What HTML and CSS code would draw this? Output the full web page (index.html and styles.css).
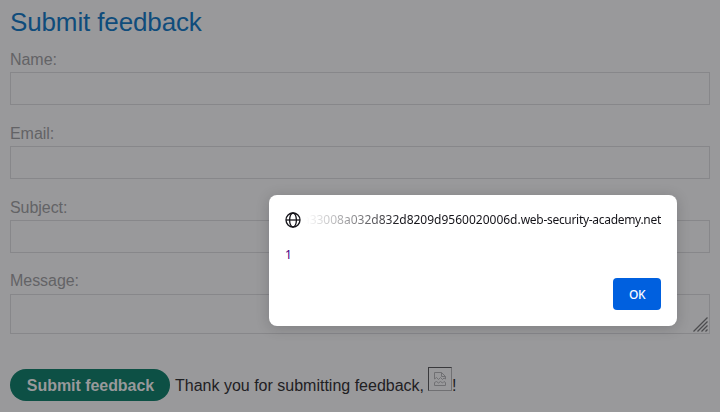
FILE: index.html
```html
<!DOCTYPE html>
<html lang="en">
<head>
<meta charset="utf-8">
<title>Submit feedback</title>
<link rel="stylesheet" href="styles.css">
</head>
<body>
<main class="page">
  <h1 class="title">Submit feedback</h1>
  <form class="form">
    <label class="label" for="name">Name:</label>
    <input class="field" id="name" type="text">
    <label class="label" for="email">Email:</label>
    <input class="field" id="email" type="text">
    <label class="label" for="subject">Subject:</label>
    <input class="field" id="subject" type="text">
    <label class="label label-message" for="message">Message:</label>
    <div class="message">
      <textarea class="field area" id="message"></textarea>
      <svg class="grip" width="15" height="15" viewBox="0 0 15 15" fill="none" stroke="#4c4c4f" stroke-width="1.3"><path d="M.5 14.5 14.5.5M4.5 14.5l10-10M8.5 14.5l6-6M12.5 14.5l2-2"/></svg>
    </div>
    <div class="actions">
      <button class="submit" type="button">Submit feedback</button>
      <span class="thanks">Thank you for submitting feedback,</span>
      <span class="broken"><svg width="12" height="14" viewBox="0 0 12 14" fill="none" stroke="#707073"><path d="M.5 7V.5h7l4 4V7M7.5.5v4h4M.5 7l2-1.500 2 2 2-2 2 2 1.500-1.500 1.500 1M.5 13.500v-3l2-1 2 1.500 2-1.500 2 1.500 1.500-1.500 1.500 1v3z"/></svg></span><span class="bang">!</span>
    </div>
  </form>
</main>
<section class="dialog" role="dialog">
  <header class="origin">
    <svg class="globe" width="16" height="16" viewBox="0 0 16 16" fill="none" stroke="#15141a" stroke-width="1.3"><circle cx="8" cy="8" r="7"/><ellipse cx="8" cy="8" rx="3.4" ry="7"/><path d="M1 8h14"/></svg>
    <div class="host"><span class="host-text">a33008a032d832d8209d9560020006d.<span class="domain">web-security-academy.net</span></span></div>
  </header>
  <p class="text">1</p>
  <button class="ok" type="button">OK</button>
</section>
</body>
</html>
```
FILE: styles.css
```css
* { box-sizing: border-box; }
body {
  margin: 0;
  height: 412px;
  overflow: hidden;
  background: #99999b;
  font-family: "Liberation Sans", Arial, sans-serif;
  font-size: 16px;
}
.page { padding: 7px 10px 0; }
.title {
  margin: 0;
  font-size: 26px;
  line-height: 30px;
  font-weight: 400;
  letter-spacing: -.13px;
  color: #0f4c7b;
}
.form { display: flex; flex-direction: column; padding-top: 13px; }
.label { height: 22px; line-height: 19px; letter-spacing: -.05px; color: #636366; }
.field {
  width: 100%;
  height: 33px;
  margin: 0 0 19px;
  padding: 6px;
  border: 1px solid #87878a;
  background: transparent;
  outline: 0;
}
.label-message { line-height: 18px; }
.message { position: relative; height: 40px; }
.area { display: block; height: 40px; margin: 0; resize: none; }
.grip { position: absolute; right: 2px; bottom: 2px; }
.actions { display: flex; align-items: center; height: 32px; margin-top: 35px; }
.submit {
  width: 160px;
  height: 32px;
  padding: 2px 0 0 1px;
  border: 0;
  border-radius: 16px;
  background: #0d5045;
  color: #99999b;
  font: bold 16px "Liberation Sans", Arial, sans-serif;
  letter-spacing: -.05px;
}
.thanks { margin-left: 5px; padding-top: 2px; color: #1f2023; white-space: nowrap; }
.broken {
  display: flex;
  align-items: center;
  justify-content: center;
  width: 24px;
  height: 24px;
  margin: -12px 0 0 4px;
  border: 1px solid;
  border-color: #39393c #707073 #707073 #39393c;
}
.bang { padding-top: 2px; color: #1f2023; }
.dialog {
  position: absolute;
  left: 269px;
  top: 195px;
  width: 408px;
  height: 131px;
  padding: 16px;
  display: flex;
  flex-direction: column;
  border-radius: 8px;
  background: #fff;
  box-shadow: 0 2px 14px rgba(20, 20, 26, .2);
  color: #15141a;
  font-family: "Noto Sans", sans-serif;
  font-size: 12px;
}
.origin { display: flex; align-items: center; height: 17px; }
.globe { flex: none; }
.host {
  display: flex;
  justify-content: flex-end;
  flex: 1;
  min-width: 0;
  margin-left: 5px;
  overflow: hidden;
  white-space: nowrap;
  line-height: 17px;
  mask-image: linear-gradient(to right, transparent, #000 96px);
}
.host-text { flex: none; }
.domain { letter-spacing: -.3px; }
.text { margin: 18px 0 0; line-height: 17px; color: #4b0082; }
.ok {
  align-self: flex-end;
  width: 48px;
  height: 32px;
  margin-top: 15px;
  padding: 0;
  border: 0;
  border-radius: 4px;
  background: #0060df;
  color: #fbfbfe;
  font: 500 12px "Noto Sans", sans-serif;
  letter-spacing: -.4px;
}
```
